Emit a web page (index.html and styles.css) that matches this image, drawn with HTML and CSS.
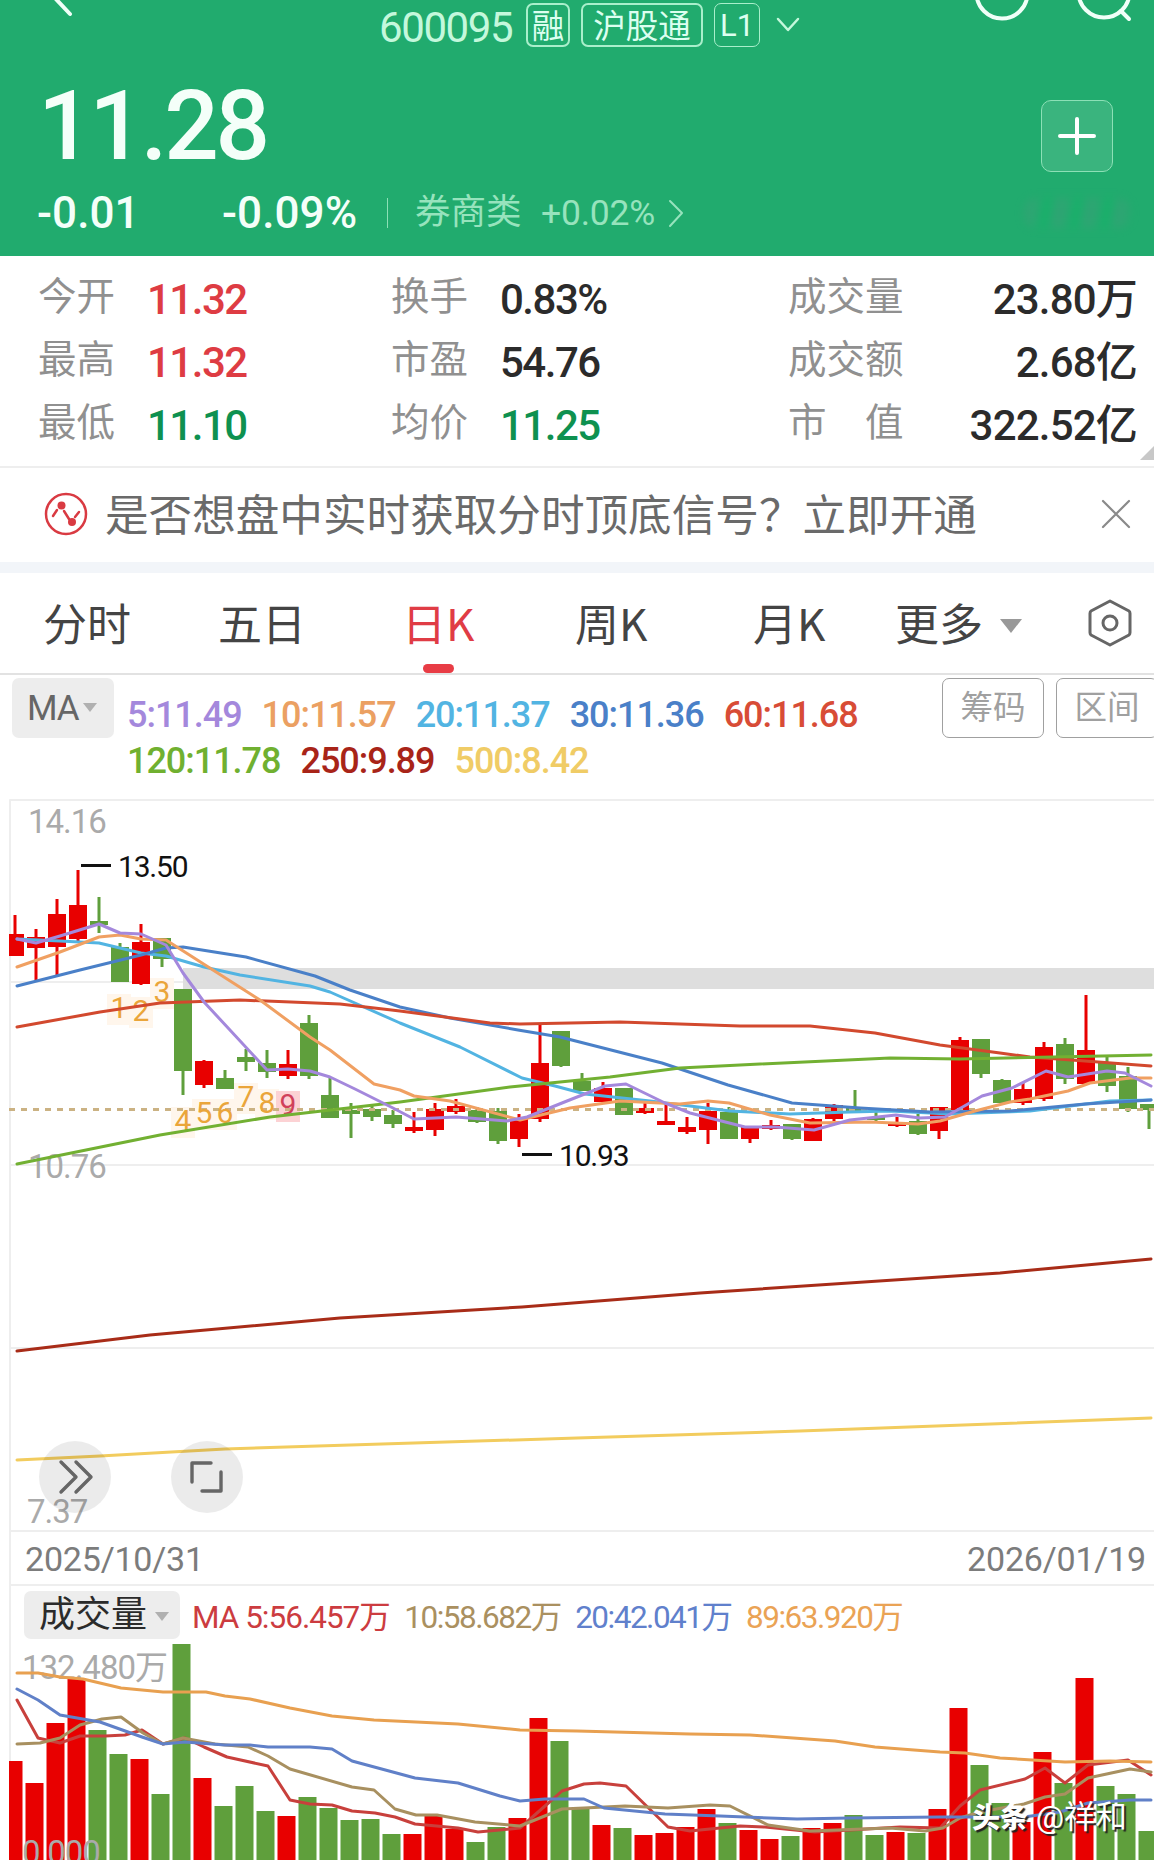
FILE: index.html
```html
<!DOCTYPE html>
<html lang="zh-CN">
<head>
  <meta charset="UTF-8" />
  <meta name="viewport" content="width=device-width, initial-scale=1" />
  <title>600095 日K</title>
  <link rel="stylesheet" href="styles.css">
</head>
<body>
  <header class="header">
    <div class="topbar">
      <svg class="back" width="24" height="24" viewBox="0 0 24 24"><path d="M2 -3 L18 14" /></svg>
      <div class="stock">
        <span class="code">600095</span>
        <span class="tag">融</span>
        <span class="tag tag-wide">沪股通</span>
        <span class="tag tag-level">L1</span>
        <svg class="down" width="26" height="18" viewBox="0 0 26 18"><path d="M3 3 L13 14 L23 3" /></svg>
      </div>
      <svg class="top-icons" width="164" height="26" viewBox="0 0 164 26">
        <circle cx="29" cy="-7" r="25.500" />
        <circle cx="131" cy="-8" r="25.500" />
        <path d="M148 11 L156 19" />
      </svg>
    </div>
    <div class="price-row">
      <span class="price">11.28</span>
      <button class="add">
        <svg width="40" height="40" viewBox="0 0 40 40"><path d="M20 3 V37 M3 20 H37" /></svg>
      </button>
    </div>
    <div class="change-row">
      <span class="change">-0.01</span>
      <span class="change percent">-0.09%</span>
      <span class="divider"></span>
      <span class="sector">券商类</span>
      <span class="sector-num">+0.02%</span>
      <svg class="more" width="18" height="30" viewBox="0 0 18 30"><path d="M3 3 L15 15 L3 28" /></svg>
      <span class="smudge"></span>
    </div>
  </header>

  <section class="quotes">
    <div class="cell"><label>今开</label><b class="up">11.32</b></div>
    <div class="cell"><label>换手</label><b>0.83%</b></div>
    <div class="cell"><label>成交量</label><b>23.80万</b></div>
    <div class="cell"><label>最高</label><b class="up">11.32</b></div>
    <div class="cell"><label>市盈</label><b>54.76</b></div>
    <div class="cell"><label>成交额</label><b>2.68亿</b></div>
    <div class="cell"><label>最低</label><b class="down-text">11.10</b></div>
    <div class="cell"><label>均价</label><b class="down-text">11.25</b></div>
    <div class="cell"><label>市　值</label><b>322.52亿</b></div>
    <span class="corner"></span>
  </section>

  <section class="notice">
    <svg class="signal" width="44" height="44" viewBox="0 0 44 44">
      <circle class="ring" cx="22" cy="22" r="20" />
      <path d="M9 24 L13 18 M20 19 L25 27 M31 25 L35 20" />
      <circle class="dot" cx="17.500" cy="13.500" r="4" />
      <circle class="dot" cx="28" cy="30" r="4" />
    </svg>
    <span class="notice-text">是否想盘中实时获取分时顶底信号？立即开通</span>
    <svg class="close" width="30" height="30" viewBox="0 0 30 30"><path d="M2 2 L28 28 M28 2 L2 28" /></svg>
  </section>

  <nav class="tabs">
    <span>分时</span>
    <span>五日</span>
    <span class="active">日K</span>
    <span>周K</span>
    <span>月K</span>
    <span class="more-tab">更多<i class="caret"></i></span>
    <svg class="setting" width="46" height="50" viewBox="0 0 46 50">
      <path d="M23 3 L42 13 Q43 14 43 15.500 V34.500 Q43 36 42 37 L23 47 L4 37 Q3 36 3 34.500 V15.500 Q3 14 4 13 Z" />
      <circle cx="23" cy="25" r="7" />
    </svg>
  </nav>

  <section class="ma-bar">
    <div class="select">MA<i class="caret"></i></div>
    <div class="ma-list">
      <span class="ma5">5:11.49</span>
      <span class="ma10">10:11.57</span>
      <span class="ma20">20:11.37</span>
      <span class="ma30">30:11.36</span>
      <span class="ma60">60:11.68</span>
      <span class="ma120">120:11.78</span>
      <span class="ma250">250:9.89</span>
      <span class="ma500">500:8.42</span>
    </div>
    <button class="chip">筹码</button>
    <button class="chip">区间</button>
  </section>

  <section class="kline">
    <svg id="kline" width="1154" height="738" viewBox="0 795 1154 738"></svg>
    <button class="round round-next">
      <svg width="72" height="72" viewBox="0 0 72 72"><path d="M22 21 L37 36 L22 51 M37 21 L52 36 L37 51" /></svg>
    </button>
    <button class="round round-full">
      <svg width="72" height="72" viewBox="0 0 72 72"><path d="M21 41 V22 H40 M50 31 V50 H31" /></svg>
    </button>
  </section>

  <div class="dates"><span>2025/10/31</span><span>2026/01/19</span></div>

  <section class="volume-bar">
    <div class="select volume-select">成交量<i class="caret"></i></div>
    <span class="v5">MA 5:56.457万</span>
    <span class="v10">10:58.682万</span>
    <span class="v20">20:42.041万</span>
    <span class="v89">89:63.920万</span>
  </section>

  <section class="volume">
    <svg id="volume" width="1154" height="220" viewBox="0 1640 1154 220"></svg>
    <div class="watermark"><b>头条</b> @祥和</div>
  </section>

  <script src="chart.js"></script>
</body>
</html>
```

FILE: styles.css
```css
* {
  box-sizing: border-box;
}

body {
  margin: 0;
  width: 1154px;
  height: 1860px;
  overflow: hidden;
  background: #fff;
  color: #2b2b2b;
  font-family: Roboto, "Noto Sans CJK SC", sans-serif;
}

svg {
  display: block;
  flex: none;
  fill: none;
  stroke-linecap: round;
  stroke-linejoin: round;
}

button {
  padding: 0;
  background: none;
  font-family: inherit;
}

span, b, label {
  white-space: nowrap;
}

/* header */
.header {
  height: 256px;
  background: #21ab6e;
  color: #f4fff9;
  overflow: hidden;
}

.topbar {
  display: flex;
  height: 50px;
  padding-left: 52px;
}

.back {
  stroke: #f0fff8;
  stroke-width: 4;
}

.stock {
  display: flex;
  align-items: center;
  width: 599px;
  margin-left: 303px;
}

.code {
  width: 147px;
  font-size: 42px;
  line-height: 54px;
  letter-spacing: -1.4px;
  color: #c4f8dc;
  padding-top: 5px;
}

.tag {
  width: 44px;
  height: 44px;
  border: 2px solid #a9efcb;
  border-radius: 7px;
  font-size: 32.5px;
  line-height: 44px;
  text-align: center;
  color: #dcfff0;
}

.tag-wide {
  width: 122px;
  margin-left: 11px;
}

.tag-level {
  width: 46px;
  margin-left: 11px;
  font-size: 31px;
  border-width: 1px;
}

.down {
  margin-left: 15px;
  stroke: #c4f8dc;
  stroke-width: 2.5;
}

.top-icons {
  margin-left: -5px;
  stroke: #f0fff8;
  stroke-width: 4;
}

.price-row {
  display: flex;
  justify-content: space-between;
  align-items: center;
  height: 142px;
  padding: 11px 41px 2px 38px;
}

.price {
  font-size: 96px;
  font-weight: 500;
  line-height: 100px;
  letter-spacing: -3.2px;
}

.add {
  display: flex;
  align-items: center;
  justify-content: center;
  width: 72px;
  height: 72px;
  margin-top: 20px;
  border: 1.5px solid #8ce0b6;
  border-radius: 10px;
  background: #3ab47e;
}

.add svg {
  stroke: #fff;
  stroke-width: 4;
}

.change-row {
  display: flex;
  align-items: center;
  height: 42px;
  padding-left: 37px;
}

.change {
  width: 185px;
  font-size: 44px;
  font-weight: 500;
  letter-spacing: 0.1px;
}

.change.percent {
  width: 165px;
}

.divider {
  width: 1px;
  height: 30px;
  background: #8ce0b6;
}

.sector {
  width: 126px;
  margin-left: 27px;
  font-size: 35.5px;
  line-height: 42px;
  color: #97e3bd;
  padding-bottom: 2px;
}

.sector-num {
  width: 126px;
  font-size: 35.5px;
  letter-spacing: -0.2px;
  color: #97e3bd;
}

.more {
  stroke: #97e3bd;
  stroke-width: 2;
}

.smudge {
  width: 106px;
  height: 30px;
  margin-left: 339px;
  border-radius: 12px;
  background: repeating-linear-gradient(100deg, #3aa077 0 14px, #12b468 20px 30px);
  opacity: 0.5;
  filter: blur(4px);
}

/* quotes */
.quotes {
  position: relative;
  display: grid;
  grid-template-columns: 353px 397px 1fr;
  grid-template-rows: repeat(3, 63px);
  height: 212px;
  padding: 10px 17px 0 38px;
  border-bottom: 2px solid #eee;
}

.cell {
  display: flex;
  align-items: center;
}

.cell label {
  width: 109px;
  font-size: 38.5px;
  line-height: 56px;
  color: #909090;
  padding-bottom: 2px;
}

.cell b {
  font-size: 42px;
  line-height: 56px;
  font-weight: 500;
  letter-spacing: -1.5px;
  padding-top: 4px;
}

.cell:nth-child(3n) {
  justify-content: space-between;
}

.cell:nth-child(3n) b {
  letter-spacing: -0.8px;
}

.up {
  color: #de3c43;
}

.down-text {
  color: #0e9150;
}

.corner {
  position: absolute;
  right: 0;
  bottom: 6px;
  border-left: 14px solid transparent;
  border-bottom: 14px solid #c8c8c8;
}

/* notice */
.notice {
  display: flex;
  align-items: center;
  height: 105px;
  padding: 0 23px 2px 44px;
  border-bottom: 11px solid #f2f5f9;
}

.signal {
  stroke: #d93a42;
  stroke-width: 2.5;
}

.signal .dot {
  fill: #d93a42;
  stroke: none;
}

.notice-text {
  flex: 1;
  margin-left: 17px;
  padding-top: 6px;
  font-size: 43.6px;
  line-height: 60px;
  color: #6a6a6a;
}

.close {
  stroke: #8a8a8a;
  stroke-width: 2.2;
}

/* period tabs */
.tabs {
  display: flex;
  align-items: center;
  height: 102px;
  padding-left: 43px;
  border-bottom: 2px solid #e2e2e2;
  font-family: "Noto Sans CJK SC", sans-serif;
  font-size: 44px;
  line-height: 99px;
  color: #444;
}

.tabs span {
  height: 100px;
}

.tabs span:nth-child(1) {
  width: 175px;
}

.tabs span:nth-child(2) {
  width: 184px;
}

.tabs span:nth-child(3) {
  width: 173px;
}

.tabs span:nth-child(4) {
  width: 178px;
}

.tabs span:nth-child(5) {
  width: 142px;
}

.tabs .active {
  position: relative;
  color: #e03c45;
}

.active::after {
  content: "";
  position: absolute;
  left: 21px;
  bottom: 0;
  width: 31px;
  height: 9px;
  border-radius: 5px;
  background: #e83c45;
}

.caret {
  display: inline-block;
  border: 7px solid transparent;
  border-top: 9px solid #b0b0b0;
  border-bottom: 0;
}

.tabs .more-tab {
  width: 192px;
}

.more-tab .caret {
  margin-left: 17px;
  border-width: 14px 11px 0;
  border-top-color: #999;
  vertical-align: 8px;
}

.setting {
  stroke: #666;
  stroke-width: 3;
}

/* moving averages */
.ma-bar {
  display: flex;
  height: 120px;
  padding: 3px 0 0 12px;
  overflow: hidden;
}

.select {
  flex: none;
  width: 102px;
  height: 60px;
  padding-left: 15px;
  border-radius: 7px;
  background: #ededed;
  font-size: 35px;
  line-height: 62px;
  letter-spacing: -1px;
  color: #666;
}

.select .caret {
  margin-left: 4px;
  vertical-align: 8px;
}

.ma-list {
  display: flex;
  flex: none;
  flex-wrap: wrap;
  align-content: flex-start;
  column-gap: 20px;
  width: 828px;
  padding: 14px 50px 0 13px;
  font-size: 36px;
  font-weight: 500;
  line-height: 46px;
  letter-spacing: -1.03px;
}

.chip {
  flex: none;
  width: 102px;
  height: 60px;
  margin-right: 12px;
  border: 1.5px solid #a0a0a0;
  border-radius: 7px;
  font-size: 32.5px;
  line-height: 58px;
  color: #a0a0a0;
}

.ma5 { color: #a488dc; }
.ma10 { color: #eba062; }
.ma20 { color: #52b4e2; }
.ma30 { color: #4a80c8; }
.ma60 { color: #d84c36; }
.ma120 { color: #70b030; }
.ma250 { color: #a82418; }
.ma500 { color: #f0cc66; }

/* charts */
.kline,
.volume {
  position: relative;
}

.grid {
  stroke: #eee;
  stroke-width: 2;
}

.line {
  stroke-width: 3;
}

.axis {
  fill: #aaa;
  font-size: 33px;
  letter-spacing: -1px;
}

.mark {
  fill: #111;
  font-size: 30px;
  letter-spacing: -1.2px;
}

.seq {
  fill: #eaa53a;
  font-size: 30px;
  text-anchor: middle;
}

.seq-last {
  fill: #d0405a;
}

.round {
  position: absolute;
  top: 646px;
  width: 72px;
  height: 72px;
  border: 0;
  border-radius: 50%;
  background: rgba(0, 0, 0, 0.08);
}

.round svg {
  stroke: #666;
  stroke-width: 3.4;
}

.round-next {
  left: 39px;
}

.round-full {
  left: 171px;
}

.dates {
  display: flex;
  justify-content: space-between;
  height: 53px;
  margin-left: 9px;
  padding: 0 8px 0 14px;
  border-left: 2px solid #eee;
  border-bottom: 2px solid #eee;
  font-size: 34px;
  line-height: 53px;
  letter-spacing: -0.2px;
  color: #7c7c7c;
}

.volume-bar {
  display: flex;
  height: 54px;
  margin-left: 9px;
  padding: 5px 0 0 13px;
  border-left: 2px solid #eee;
  font-size: 31.5px;
  line-height: 53px;
  letter-spacing: -1.5px;
}

.volume-bar span {
  margin-right: 14.5px;
}

.volume-bar .v5 {
  letter-spacing: -1px;
}

.volume-select {
  width: 156px;
  height: 48px;
  margin-right: 12px;
  font-size: 36px;
  line-height: 48px;
  letter-spacing: 0;
  color: #2b2b2b;
}

.volume-select .caret {
  margin-left: 8px;
  vertical-align: 6px;
}

.v5 { color: #cc3c40; }
.v10 { color: #aa9060; }
.v20 { color: #6080cc; }
.v89 { color: #eaa355; }

.watermark {
  position: absolute;
  left: 972px;
  top: 159px;
  font-size: 31.5px;
  line-height: 38px;
  color: #fff;
  text-shadow: 2px 2px 1px #222;
  white-space: nowrap;
}

.watermark b {
  font-size: 28px;
  font-weight: 900;
}
```

FILE: chart.js
```js
const NS = 'http://www.w3.org/2000/svg';
const RED = '#e80000';
const GREEN = '#5f9f3c';
const STEP = 21;

// direction, high, body top, body bottom, low
const candles = [
  ['r', 915, 934, 956, 956], ['r', 929, 937, 948, 980], ['r', 899, 914, 947, 975], ['r', 870, 905, 939, 941],
  ['g', 897, 921, 925, 933], ['g', 943, 947, 982, 982], ['r', 924, 942, 984, 985], ['g', 938, 938, 959, 967],
  ['g', 989, 989, 1071, 1095], ['r', 1060, 1061, 1085, 1088], ['g', 1070, 1078, 1089, 1089], ['g', 1049, 1057, 1062, 1071],
  ['g', 1050, 1063, 1072, 1078], ['r', 1050, 1064, 1076, 1079], ['g', 1015, 1023, 1076, 1079], ['g', 1077, 1095, 1118, 1118],
  ['g', 1103, 1110, 1114, 1138], ['g', 1105, 1109, 1117, 1121], ['g', 1110, 1115, 1124, 1128], ['r', 1112, 1127, 1131, 1133],
  ['r', 1103, 1109, 1130, 1136], ['r', 1099, 1106, 1112, 1114], ['g', 1107, 1110, 1122, 1123], ['g', 1108, 1111, 1141, 1144],
  ['r', 1114, 1119, 1139, 1147], ['r', 1025, 1063, 1119, 1122], ['g', 1031, 1031, 1066, 1067], ['g', 1073, 1081, 1091, 1091],
  ['r', 1082, 1088, 1102, 1102], ['g', 1088, 1088, 1115, 1115], ['r', 1103, 1108, 1113, 1114], ['r', 1104, 1121, 1125, 1125],
  ['r', 1117, 1127, 1132, 1134], ['r', 1103, 1111, 1130, 1144], ['g', 1107, 1112, 1139, 1139], ['r', 1126, 1126, 1139, 1143],
  ['r', 1120, 1125, 1129, 1130], ['g', 1124, 1124, 1139, 1140], ['r', 1118, 1119, 1141, 1141], ['r', 1104, 1105, 1119, 1121],
  ['g', 1090, 1107, 1111, 1111], ['g', 1111, 1117, 1120, 1121], ['r', 1117, 1124, 1126, 1127], ['g', 1114, 1121, 1134, 1135],
  ['r', 1107, 1107, 1131, 1139], ['r', 1037, 1040, 1110, 1112], ['g', 1039, 1039, 1074, 1078], ['g', 1079, 1080, 1103, 1103],
  ['r', 1082, 1089, 1103, 1105], ['r', 1042, 1047, 1099, 1101], ['g', 1038, 1044, 1079, 1084], ['r', 995, 1050, 1084, 1084],
  ['g', 1056, 1063, 1086, 1092], ['g', 1067, 1076, 1109, 1112], ['g', 1104, 1104, 1110, 1129]
];

const averages = {
  '#f2cc5e': '17,1460 100,1456 225,1449 350,1445 577,1438 800,1431 1151,1418',
  '#a82c18': '17,1351 150,1335 340,1318 522,1307 700,1293 1000,1273 1151,1259',
  '#52b4e2': '17,939 60,941 99,943 141,953 166,956 204,967 240,975 310,986 330,992 400,1023 460,1047 522,1078 555,1086 585,1094 650,1101 730,1111 790,1114 850,1112 890,1111 950,1114 1030,1111 1110,1101 1151,1100',
  '#4a80c8': '17,986 80,970 141,955 166,948 183,947 246,957 315,976 350,990 400,1007 450,1018 518,1030 560,1037 662,1063 728,1085 792,1103 860,1108 930,1112 1010,1111 1085,1104 1151,1100',
  '#d2492e': '17,1027 100,1012 160,1003 240,1000 340,1004 400,1011 490,1023 520,1024 620,1022 740,1026 810,1026 875,1033 940,1045 1000,1053 1030,1057 1085,1061 1151,1066',
  '#72b032': '17,1164 160,1135 270,1117 400,1102 510,1087 610,1077 680,1068 760,1064 890,1058 960,1059 1151,1055',
  '#f0a062': '17,967 60,952 99,937 120,935 141,939 166,940 260,1000 310,1037 330,1050 374,1084 400,1090 414,1096 450,1101 520,1120 570,1108 620,1101 680,1104 708,1101 729,1103 770,1115 810,1123 870,1122 918,1124 940,1121 975,1111 1010,1102 1030,1099 1068,1091 1090,1083 1130,1078 1151,1078',
  '#a488dc': '17,939 36,943 60,936 99,924 120,933 141,934 166,945 183,973 204,1002 267,1070 288,1069 310,1071 330,1077 355,1089 393,1108 414,1119 456,1117 507,1121 527,1117 567,1101 605,1086 626,1084 665,1103 690,1113 745,1127 775,1127 814,1130 850,1120 896,1115 920,1118 945,1117 982,1096 1012,1088 1046,1071 1068,1077 1107,1071 1125,1073 1151,1086'
};

// direction, top of the bar
const volumes = [
  ['r', 1761], ['r', 1783], ['r', 1723], ['r', 1678], ['g', 1730], ['g', 1754], ['r', 1759], ['g', 1794], ['g', 1644], ['r', 1778], ['g', 1806],
  ['g', 1786], ['g', 1811], ['r', 1816], ['g', 1797], ['g', 1808], ['g', 1820], ['g', 1819], ['g', 1834], ['r', 1834], ['r', 1816], ['r', 1829],
  ['g', 1842], ['g', 1827], ['r', 1818], ['r', 1718], ['g', 1741], ['g', 1808], ['r', 1825], ['g', 1828], ['r', 1835], ['r', 1833], ['r', 1827],
  ['r', 1809], ['g', 1823], ['r', 1830], ['r', 1839], ['g', 1836], ['r', 1828], ['r', 1823], ['g', 1815], ['g', 1835], ['r', 1832], ['g', 1833],
  ['r', 1809], ['r', 1708], ['g', 1765], ['g', 1803], ['r', 1822], ['r', 1752], ['g', 1783], ['r', 1678], ['g', 1786], ['g', 1794], ['g', 1831]
];

const volumeAverages = {
  '#c8403c': '17,1700 38,1738 60,1743 80,1736 105,1736 125,1735 142,1730 163,1744 185,1738 204,1747 227,1757 268,1766 290,1800 310,1804 332,1805 352,1811 375,1813 395,1817 415,1824 458,1828 478,1832 520,1828 545,1806 562,1791 584,1784 600,1783 626,1786 668,1827 690,1831 740,1826 765,1827 815,1832 850,1830 900,1827 940,1828 960,1806 980,1790 1025,1779 1045,1768 1065,1783 1088,1765 1128,1760 1151,1775',
  '#a89060': '17,1744 40,1743 60,1738 80,1725 102,1719 121,1717 143,1733 163,1744 183,1738 215,1744 248,1747 268,1756 290,1769 352,1787 374,1790 395,1809 416,1815 437,1815 475,1822 520,1826 562,1809 584,1808 625,1806 668,1808 710,1805 730,1806 768,1825 810,1831 890,1828 925,1831 943,1828 960,1818 980,1812 1024,1804 1045,1797 1065,1794 1088,1778 1130,1769 1151,1772',
  '#6080c8': '17,1689 38,1700 60,1715 100,1722 142,1737 163,1744 185,1742 225,1745 250,1745 268,1747 310,1747 332,1749 352,1761 415,1778 458,1783 500,1796 520,1801 545,1799 584,1799 604,1808 665,1814 720,1816 797,1819 850,1818 940,1817 1024,1817 1060,1812 1088,1803 1130,1800 1151,1800',
  '#e8a050': '17,1673 38,1673 60,1677 83,1679 121,1688 163,1692 206,1692 225,1696 250,1699 290,1708 332,1716 374,1720 458,1724 520,1730 577,1731 690,1734 750,1735 835,1741 875,1747 940,1752 965,1753 1000,1758 1065,1762 1110,1761 1151,1762'
};

// x, baseline of the sequence numbers
const sequence = [[119, 1018], [141, 1021], [162, 1002], [183, 1131], [204, 1123], [225, 1123], [246, 1107], [267, 1113], [288, 1115]];

function add(svg, name, attrs, text) {
  const el = document.createElementNS(NS, name);
  Object.keys(attrs).forEach(key => el.setAttribute(key, attrs[key]));
  if (text) el.textContent = text;
  svg.appendChild(el);
}

function rect(svg, left, top, right, bottom, fill) {
  add(svg, 'rect', { x: left, y: top, width: right - left, height: Math.max(bottom - top, 2), fill });
}

function lines(svg, set) {
  Object.keys(set).forEach(stroke => add(svg, 'polyline', { class: 'line', points: set[stroke], stroke }));
}

function label(svg, cls, x, y, text) {
  add(svg, 'text', { class: cls, x, y }, text);
}

const kline = document.getElementById('kline');
add(kline, 'path', { class: 'grid', d: 'M10 1533 V800 H1154 M10 982 H1154 M10 1165 H1154 M10 1348 H1154 M10 1531 H1154' });
rect(kline, 183, 968, 1154, 989, '#dedede');
sequence.forEach(([x, y], i) => rect(kline, x - 12, y - 24, x + 12, y + 7, i === 8 ? '#fcd2d4' : '#fff6ec'));
label(kline, 'axis', 28, 833, '14.16');
label(kline, 'axis', 28, 1178, '10.76');
label(kline, 'axis', 27, 1523, '7.37');

candles.forEach(([dir, high, top, bottom, low], i) => {
  const x = 15 + i * STEP;
  const color = dir === 'r' ? RED : GREEN;
  rect(kline, x - 1.5, high, x + 1.5, low, color);
  rect(kline, Math.max(x - 9, 9), top, x + 9, bottom, color);
});
add(kline, 'path', { d: 'M9 1109.500 H1154', stroke: '#cbb283', 'stroke-width': 3, 'stroke-dasharray': '6 6', 'stroke-linecap': 'butt' });
sequence.forEach(([x, y], i) => label(kline, i === 8 ? 'seq seq-last' : 'seq', x, y, String(i + 1)));
lines(kline, averages);
add(kline, 'path', { d: 'M81 865.500 H111 M522 1154.500 H552', stroke: '#111', 'stroke-width': 3, 'stroke-linecap': 'butt' });
label(kline, 'mark', 118, 877, '13.50');
label(kline, 'mark', 559, 1166, '10.93');

const volume = document.getElementById('volume');
add(volume, 'path', { class: 'grid', d: 'M10 1640 V1860' });
volumes.forEach(([dir, top], i) => {
  const x = 13.5 + i * STEP;
  rect(volume, Math.max(x - 9, 9), top, x + 9, 1860, dir === 'r' ? RED : GREEN);
});
label(volume, 'axis', 22, 1679, '132.480万');
label(volume, 'axis', 22, 1864, '0.000');
lines(volume, volumeAverages);
```
